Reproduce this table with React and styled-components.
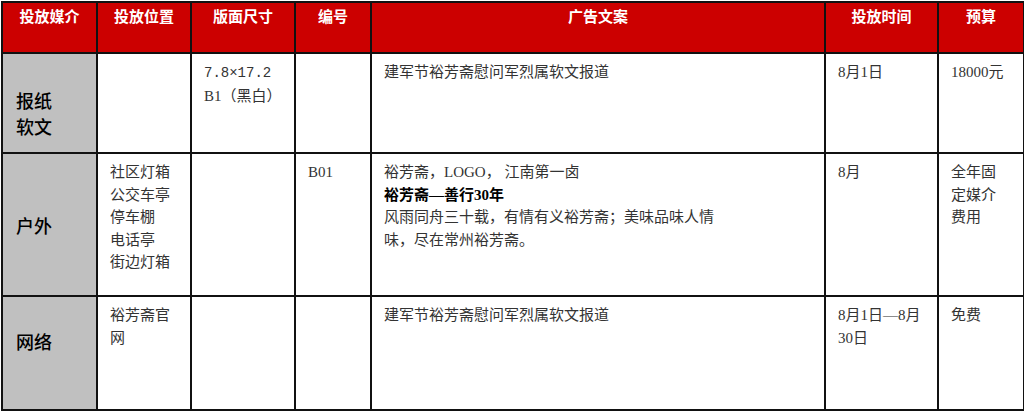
import React from 'react';
import styled, { createGlobalStyle } from 'styled-components';

const GlobalStyle = createGlobalStyle`
  html, body {
    margin: 0;
    padding: 0;
    background: #fff;
  }
  body {
    font-family: "Liberation Serif", "Noto Sans CJK SC", serif;
  }
`;

const Sheet = styled.table`
  margin: 1px 0 0 1px;
  width: 1022px;
  table-layout: fixed;
  border-collapse: collapse;
  border: 2px solid #111;
`;

const HeadCell = styled.th`
  background: #cc0000;
  color: #fff;
  font-family: "Liberation Serif", "Noto Sans CJK SC", serif;
  font-weight: 700;
  font-size: 15px;
  line-height: 22px;
  text-align: center;
  vertical-align: top;
  padding: 3px 4px 0;
  border: 2px solid #111;
`;

const MediaCell = styled.td`
  background: #c0c0c0;
  color: #000;
  font-family: "Noto Sans CJK SC", sans-serif;
  font-weight: 500;
  font-size: 18px;
  line-height: 26px;
  vertical-align: middle;
  padding: ${(p) => p.$top || '0'} 0 ${(p) => p.$bottom || '0'} 13px;
  border: 2px solid #111;
`;

const Cell = styled.td`
  color: #333;
  font-size: 15px;
  line-height: 22.5px;
  vertical-align: top;
  padding: 7px 8px 0 12px;
  border: 2px solid #111;
  white-space: nowrap;
`;

const Code = styled.span`
  font-family: "Liberation Mono", monospace;
  font-size: 14px;
`;

const Strong = styled.span`
  color: #000;
  font-weight: 700;
`;

const Row = styled.tr`
  height: ${(p) => p.$h}px;
`;

const cols = [95, 94, 104, 76, 454, 113, 86];
const heads = ['投放媒介', '投放位置', '版面尺寸', '编号', '广告文案', '投放时间', '预算'];

export default function App() {
  return (
    <>
      <GlobalStyle />
      <Sheet>
        <colgroup>
          {cols.map((w, i) => (
            <col key={i} style={{ width: w }} />
          ))}
        </colgroup>
        <thead>
          <Row $h={51}>
            {heads.map((h) => (
              <HeadCell key={h}>{h}</HeadCell>
            ))}
          </Row>
        </thead>
        <tbody>
          <Row $h={100}>
            <MediaCell $top="20px">报纸<br />软文</MediaCell>
            <Cell />
            <Cell><Code>7.8×17.2</Code><br />B1（黑白）</Cell>
            <Cell />
            <Cell>建军节裕芳斋慰问军烈属软文报道</Cell>
            <Cell>8月1日</Cell>
            <Cell>18000元</Cell>
          </Row>
          <Row $h={143}>
            <MediaCell>户外</MediaCell>
            <Cell>社区灯箱<br />公交车亭<br />停车棚<br />电话亭<br />街边灯箱</Cell>
            <Cell />
            <Cell>B01</Cell>
            <Cell>
              裕芳斋，LOGO，&nbsp;江南第一卤<br />
              <Strong>裕芳斋—善行30年</Strong><br />
              风雨同舟三十载，有情有义裕芳斋；美味品味人情<br />
              味，尽在常州裕芳斋。
            </Cell>
            <Cell>8月</Cell>
            <Cell>全年固<br />定媒介<br />费用</Cell>
          </Row>
          <Row $h={114}>
            <MediaCell $bottom="24px">网络</MediaCell>
            <Cell>裕芳斋官<br />网</Cell>
            <Cell />
            <Cell />
            <Cell>建军节裕芳斋慰问军烈属软文报道</Cell>
            <Cell>8月1日—8月<br />30日</Cell>
            <Cell>免费</Cell>
          </Row>
        </tbody>
      </Sheet>
    </>
  );
}
